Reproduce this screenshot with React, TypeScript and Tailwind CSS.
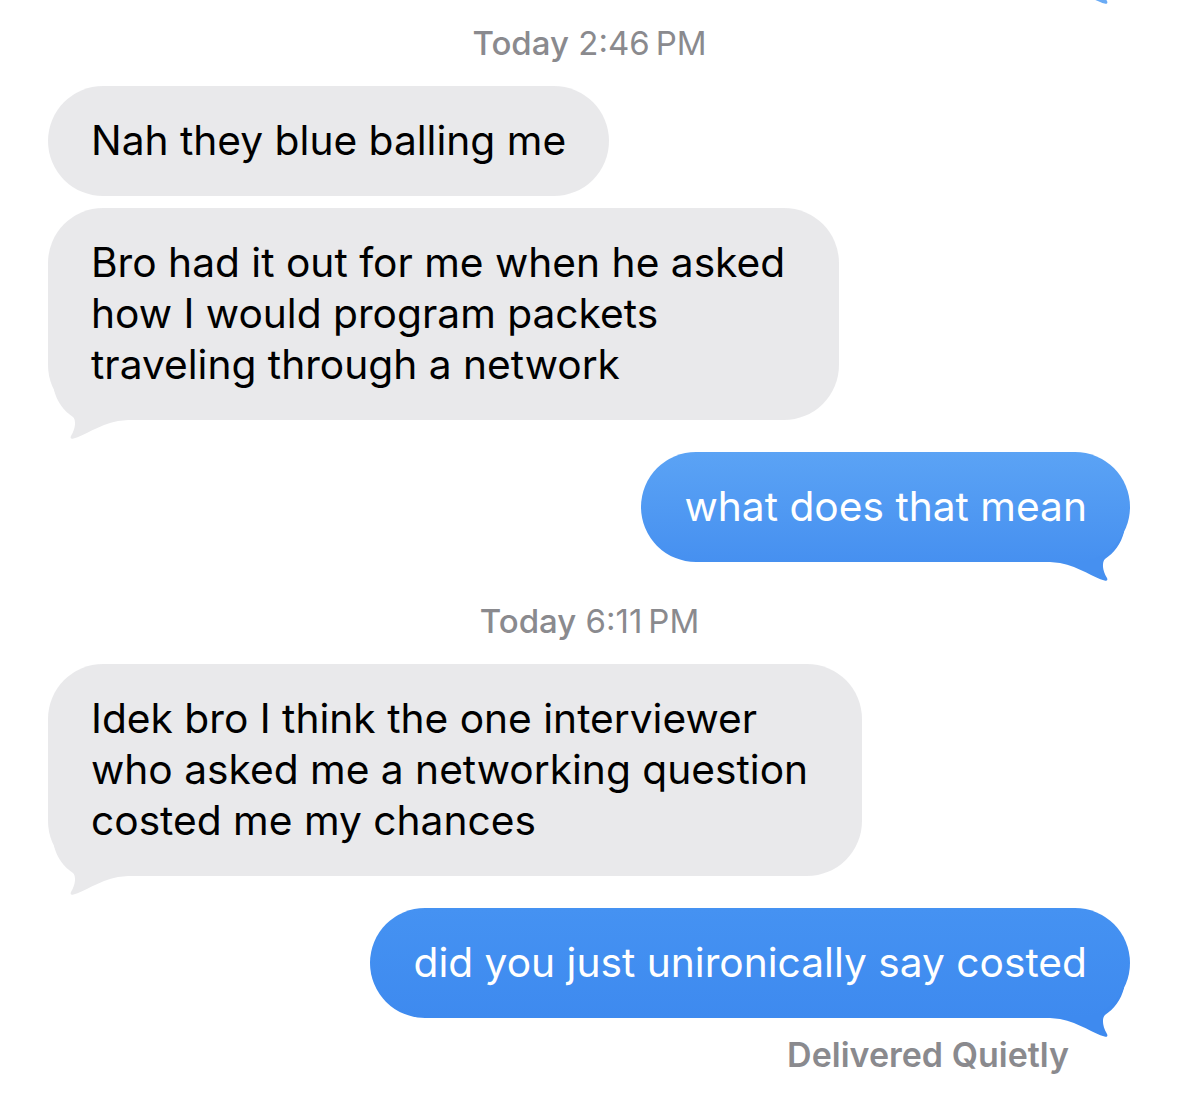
const GRAY = '#e9e9eb';

// tail drawn in an 80x50 box whose top sits 30px above the bubble bottom
const Tail = ({ color, side }: { color: string; side: 'left' | 'right' }) => (
  <svg
    viewBox="0 0 80 50"
    className={`absolute -bottom-[20px] w-[80px] h-[50px] ${side === 'left' ? 'left-0' : 'right-0 -scale-x-100'}`}
  >
    <path
      d="M80 0 L6 0 C9 12 16 21 25 27 C28 30 28 38 23 46 C22 48 23 49.5 25.5 48.5 C36 46 50 35 70 31 L80 30 Z"
      fill={color}
    />
  </svg>
);

interface BubbleProps {
  lines: string[];
  side: 'left' | 'right';
  from?: string;
  to?: string;
  tail?: boolean;
  className?: string;
}

const Bubble = ({ lines, side, from = GRAY, to = GRAY, tail = true, className = '' }: BubbleProps) => (
  <div className={`relative w-fit ${side === 'left' ? 'ml-[48px] self-start' : 'mr-[49px] self-end'} ${className}`}>
    <div
      className={`relative z-10 rounded-[55px] pl-[43px] pt-[29px] pb-[30px] text-[40.7px] leading-[51px] ${
        side === 'left' ? 'text-black' : 'text-white'
      } ${lines.length > 1 ? 'pr-[54px]' : 'pr-[43px]'}`}
      style={{ background: `linear-gradient(${from}, ${to})` }}
    >
      {lines.map((l, i) => (
        <div key={i} className="whitespace-nowrap">{l}</div>
      ))}
    </div>
    {tail && <Tail color={to} side={side} />}
  </div>
);

const Stamp = ({ time, className = '' }: { time: string; className?: string }) => (
  <div className={`self-center text-[33px] leading-[38px] text-[#8a8a8e] ${className}`}>
    <span className="font-medium">Today</span> {time}
  </div>
);

export default function App() {
  return (
    <div
      className="relative flex flex-col w-[1179px] h-[1103px] bg-white overflow-hidden pt-[24px]"
      style={{ fontFamily: 'Inter, "Noto Sans", sans-serif' }}
    >
      {/* tip of an earlier message, cut off at the top */}
      <svg viewBox="0 0 80 50" className="absolute -top-[45px] right-[49px] w-[80px] h-[50px] -scale-x-100">
        <path
          d="M80 0 L6 0 C9 12 16 21 25 27 C28 30 28 38 23 46 C22 48 23 49.5 25.5 48.5 C36 46 50 35 70 31 L80 30 Z"
          fill="#6aabf5"
        />
      </svg>

      <Stamp time={'2:46\u2009PM'} />

      <Bubble side="left" tail={false} className="mt-[24px]" lines={['Nah they blue balling me']} />
      <Bubble
        side="left"
        className="mt-[12px]"
        lines={['Bro had it out for me when he asked', 'how I would program packets', 'traveling through a network']}
      />
      <Bubble side="right" className="mt-[32px]" from="#5ba3f5" to="#4690f0" lines={['what does that mean']} />

      <Stamp time={'6:11\u2009PM'} className="mt-[40px]" />

      <Bubble
        side="left"
        className="mt-[24px]"
        lines={['Idek bro I think the one interviewer', 'who asked me a networking question', 'costed me my chances']}
      />
      <Bubble side="right" className="mt-[32px]" from="#4592f2" to="#3e8aef" lines={['did you just unironically say costed']} />

      <div className="self-end mr-[110px] mt-[17px] text-[34px] leading-[40px] font-semibold text-[#8a8a8e]">
        Delivered Quietly
      </div>
    </div>
  );
}
